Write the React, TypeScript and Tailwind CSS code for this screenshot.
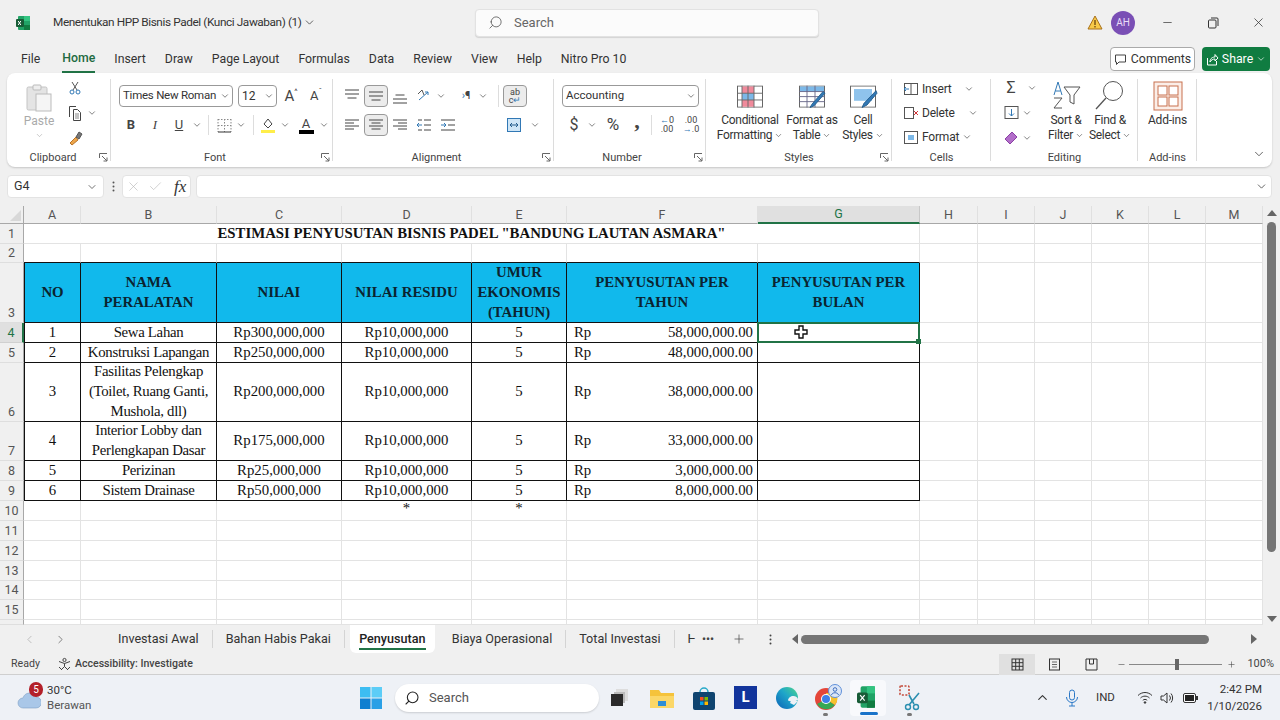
import type { ReactNode } from "react";
import { ChevronDown, Search, X, Minus, Plus, ChevronLeft, ChevronRight, ChevronUp, Check } from "lucide-react";

const UI = "font-['Roboto',sans-serif]";

// ─── Small helpers ────────────────────────────────────────────────────────────

function Chev({ size = 10, className = "text-[#444]" }: { size?: number; className?: string }) {
  return <ChevronDown size={size} strokeWidth={1.6} className={`shrink-0 ${className}`} />;
}

function Slot({ w, children, className = "" }: { w: number; children?: ReactNode; className?: string }) {
  return (
    <div className={`flex shrink-0 items-center justify-center ${className}`} style={{ width: w }}>
      {children}
    </div>
  );
}

function Svg({ s = 16, h, children }: { s?: number; h?: number; children: ReactNode }) {
  return (
    <svg width={s} height={h ?? s} viewBox={`0 0 ${s} ${h ?? s}`} fill="none" stroke="#555" strokeWidth="1" className="shrink-0">
      {children}
    </svg>
  );
}

function Launcher() {
  return (
    <svg width="9" height="9" viewBox="0 0 9 9" fill="none" stroke="#666" className="absolute bottom-[5px] right-[3px]">
      <path d="M.5 5V.5H8M3 3l5 5M8 4.5V8H4.5" />
    </svg>
  );
}

function Group({ w, label, launcher, labelPad = 0, children }: { w: number; label?: string; launcher?: boolean; labelPad?: number; children: ReactNode }) {
  return (
    <div className="relative flex h-full shrink-0 flex-col pt-[11px]" style={{ width: w }}>
      <div className="h-[67px]">{children}</div>
      {label && (
        <div className="text-center text-[11px] leading-[14px] text-[#444]" style={{ paddingRight: labelPad }}>
          {label}
        </div>
      )}
      {launcher && <Launcher />}
      <div className="absolute bottom-[6px] right-0 top-[6px] w-px bg-[#dcdcdc]" />
    </div>
  );
}

function Lines({ rows, align = "center" }: { rows: [number, number][]; align?: "left" | "center" | "right" }) {
  return (
    <Svg s={16}>
      {rows.map(([y, w], i) => {
        const x = align === "left" ? 1 : align === "right" ? 15 - w : (16 - w) / 2;
        return <path key={i} d={`M${x} ${y}h${w}`} stroke="#444" />;
      })}
    </Svg>
  );
}

function BigLabel({ a, b }: { a: string; b: string }) {
  return (
    <div className="mt-[2px] whitespace-nowrap text-center text-[12px] leading-[15px] tracking-[-0.3px] text-[#333]">
      <div>{a}</div>
      <div className="flex items-center justify-center gap-[2px]">
        {b}
        <Chev size={9} />
      </div>
    </div>
  );
}

// ─── Sheet data ───────────────────────────────────────────────────────────────

const COLUMNS = ["A", "B", "C", "D", "E", "F", "G", "H", "I", "J", "K", "L", "M"];

const HEAD = ["NO", "NAMA\nPERALATAN", "NILAI", "NILAI RESIDU", "UMUR\nEKONOMIS\n(TAHUN)", "PENYUSUTAN PER\nTAHUN", "PENYUSUTAN PER\nBULAN"];

const DATA = [
  { row: 4, no: "1", name: "Sewa Lahan", nilai: "Rp300,000,000", perTahun: "58,000,000.00" },
  { row: 5, no: "2", name: "Konstruksi Lapangan", nilai: "Rp250,000,000", perTahun: "48,000,000.00" },
  { row: 6, no: "3", name: "Fasilitas Pelengkap\n(Toilet, Ruang Ganti,\nMushola, dll)", nilai: "Rp200,000,000", perTahun: "38,000,000.00" },
  { row: 7, no: "4", name: "Interior Lobby dan\nPerlengkapan Dasar", nilai: "Rp175,000,000", perTahun: "33,000,000.00" },
  { row: 8, no: "5", name: "Perizinan", nilai: "Rp25,000,000", perTahun: "3,000,000.00" },
  { row: 9, no: "6", name: "Sistem Drainase", nilai: "Rp50,000,000", perTahun: "8,000,000.00" },
];

const GRID_LINE = "border-r border-b border-[#e3e3e3]";
const BLACK = "border-r border-b border-[#111]";
const CENTER = "flex items-center justify-center text-center whitespace-pre-line";

function RowHead({ n, active, hidden }: { n: number; active?: boolean; hidden?: boolean }) {
  return (
    <div
      className={`${UI} flex items-end justify-center border-b border-r text-[12.5px] leading-[18px] ${
        active ? "border-r-2 border-b-[#d0d0d0] border-r-[#217346] bg-[#e0e0e0] text-[#217346]" : "border-b-[#dedede] border-r-[#a8a8a8] bg-[#f0f0f0] text-[#555]"
      }`}
    >
      {hidden ? null : n}
    </div>
  );
}

function EmptyCols({ from }: { from: number }) {
  return (
    <>
      {COLUMNS.slice(from).map((c) => (
        <div key={c} className={GRID_LINE} />
      ))}
    </>
  );
}

function Sheet() {
  return (
    <div className="grid h-[419px] w-[1263px] shrink-0 grid-cols-[24px_57px_136px_125px_130px_95px_191px_162px_58px_57px_57px_57px_57px_57px] grid-rows-[18px_20px_19px_60px_20px_20px_59px_39px_20px_20px_20px_20px_20px_20px_19px_20px_5px] overflow-hidden bg-white font-['Liberation_Serif',serif] text-[14.8px] leading-[19.7px] text-[#111]">
      {/* column headers */}
      <div className="flex items-end justify-end border-b border-r border-[#a8a8a8] bg-[#f0f0f0] p-[2px]">
        <div className="h-0 w-0 border-b-[11px] border-l-[11px] border-b-[#d8d8d8] border-l-transparent" />
      </div>
      {COLUMNS.map((c) => (
        <div
          key={c}
          className={`${UI} flex items-center justify-center border-r text-[12.5px] ${
            c === "G" ? "border-b-2 border-b-[#217346] border-r-[#c8c8c8] bg-[#e0e0e0] text-[#217346]" : "border-b border-b-[#a8a8a8] border-r-[#e0e0e0] bg-[#f0f0f0] text-[#555]"
          }`}
        >
          {c}
        </div>
      ))}

      {/* title */}
      <RowHead n={1} />
      <div className={`${GRID_LINE} col-span-7 ${CENTER} font-bold`}>ESTIMASI PENYUSUTAN BISNIS PADEL &quot;BANDUNG LAUTAN ASMARA&quot;</div>
      <EmptyCols from={7} />

      <RowHead n={2} />
      {COLUMNS.slice(0, 7).map((c) => (
        <div key={c} className="border-b border-r border-b-[#111] border-r-[#e3e3e3]" />
      ))}
      <EmptyCols from={7} />

      {/* table head */}
      <RowHead n={3} />
      {HEAD.map((h, i) => (
        <div key={h} className={`${BLACK} ${i === 0 ? "border-l" : ""} ${CENTER} bg-[#11b9ec] pt-[1px] font-bold text-[#0b2430]`}>
          {h}
        </div>
      ))}
      <EmptyCols from={7} />

      {/* table rows */}
      {DATA.map((d) => (
        <div key={d.row} className="contents">
          <RowHead n={d.row} active={d.row === 4} />
          <div className={`${BLACK} border-l ${CENTER}`}>{d.no}</div>
          <div className={`${BLACK} ${CENTER} tracking-[-0.3px]`}>{d.name}</div>
          <div className={`${BLACK} ${CENTER}`}>{d.nilai}</div>
          <div className={`${BLACK} ${CENTER}`}>Rp10,000,000</div>
          <div className={`${BLACK} ${CENTER}`}>5</div>
          <div className={`${BLACK} flex items-center justify-between pl-[7px] pr-1`}>
            <span>Rp</span>
            <span>{d.perTahun}</span>
          </div>
          <div className={`${BLACK} relative`}>
            {d.row === 4 && (
              <div className="absolute -inset-x-px -bottom-px -top-px z-10 border-2 border-[#217346]">
                <div className="absolute -bottom-[3px] -right-[3px] h-[5px] w-[5px] bg-[#217346]" />
                <svg width="14" height="14" viewBox="0 0 14 14" className="absolute left-[35px] top-[1px]">
                  <path d="M5 1h4v4h4v4H9v4H5V9H1V5h4z" fill="#fff" stroke="#111" strokeWidth="1.4" />
                </svg>
              </div>
            )}
          </div>
          <EmptyCols from={7} />
        </div>
      ))}

      {/* rows below the table */}
      {[10, 11, 12, 13, 14, 15, 16].map((n) => (
        <div key={n} className="contents">
          <RowHead n={n} hidden={n === 16} />
          {COLUMNS.map((c) => (
            <div key={c} className={`${GRID_LINE} flex justify-center font-normal leading-[14px]`}>
              {n === 10 && (c === "D" || c === "E") ? "*" : null}
            </div>
          ))}
        </div>
      ))}
    </div>
  );
}

// ─── Ribbon ───────────────────────────────────────────────────────────────────

function Ribbon() {
  return (
    <div className="ml-[7px] flex h-[94px] w-[1265px] rounded-lg bg-white shadow-[0_1px_2px_rgba(0,0,0,0.18)]">
      {/* Clipboard */}
      <Group w={104} label="Clipboard" launcher labelPad={12}>
        <div className="flex">
          <div className="ml-[15px] flex w-[34px] flex-col items-center">
            <Svg s={28} h={28}>
              <rect x="2" y="3" width="20" height="23" rx="1.5" fill="#e4e4e4" stroke="#c4c4c4" />
              <rect x="8" y="1" width="8" height="5" rx="1" fill="#eee" stroke="#bbb" />
              <rect x="11" y="10" width="15" height="17" fill="#f5f5f5" stroke="#bbb" />
            </Svg>
            <div className="mt-[1px] text-[12px] leading-[16px] text-[#aaa]">Paste</div>
            <Chev size={9} className="mt-[2px] text-[#aaa]" />
          </div>
          <div className="-mt-[5px] ml-[7px] flex flex-col gap-[8px]">
            <Slot w={24} className="h-[17px]">
              <Svg s={14}>
                <path d="M4 1l5 8M10 1L5 9" stroke="#555" />
                <circle cx="4" cy="11" r="2" stroke="#3178b5" />
                <circle cx="10" cy="11" r="2" stroke="#3178b5" />
              </Svg>
            </Slot>
            <div className="flex items-center">
              <Slot w={24} className="h-[17px]">
                <Svg s={16}>
                  <path d="M2.5 12V1.5H9M6.5 4.5h4l3 3v8h-7z" stroke="#444" />
                  <path d="M8 9h4M8 11h4M8 13h4" stroke="#888" />
                </Svg>
              </Slot>
              <Chev size={10} />
            </div>
            <Slot w={24} className="h-[17px]">
              <Svg s={16}>
                <path d="M9 7l-6 6 2 2 6-5z" fill="#eda54a" stroke="#b8742a" />
                <path d="M9 7l3-5 3 2-3 5z" fill="#777" stroke="#555" />
              </Svg>
            </Slot>
          </div>
        </div>
      </Group>

      {/* Font */}
      <Group w={222} label="Font" launcher labelPad={14}>
        <div className="flex h-[24px] items-center pl-[8px]">
          <div className="flex h-[22px] w-[114px] items-center justify-between whitespace-nowrap rounded border border-[#999] pl-[3px] pr-[2px] text-[11.5px] tracking-[-0.25px] text-[#333]">
            Times New Roman <Chev />
          </div>
          <div className="ml-[5px] flex h-[22px] w-[39px] items-center justify-between rounded border border-[#999] pl-[3px] pr-[2px] text-[12px] text-[#333]">
            12 <Chev />
          </div>
          <Slot w={26} className="ml-[1px] text-[15px] text-[#444]">
            A<sup className="text-[8px]">^</sup>
          </Slot>
          <Slot w={24} className="text-[13px] text-[#444]">
            A<sup className="text-[8px]">ˇ</sup>
          </Slot>
        </div>
        <div className="mt-[5px] flex h-[24px] items-center pl-[8px] text-[13px] text-[#444]">
          <Slot w={24} className="font-bold">B</Slot>
          <Slot w={24} className="font-['Liberation_Serif',serif] italic">I</Slot>
          <Slot w={24} className="underline">U</Slot>
          <Slot w={12}><Chev /></Slot>
          <div className="mx-[5px] h-[20px] w-px bg-[#ddd]" />
          <Slot w={20}>
            <Svg s={15}>
              <path d="M1 1.5h13M1 7.5h13M7.5 1v13M1 1v13M14 1v13" stroke="#888" strokeDasharray="1.5 1.5" />
              <path d="M1 14h13" stroke="#333" />
            </Svg>
          </Slot>
          <Slot w={14}><Chev /></Slot>
          <div className="mx-[5px] h-[20px] w-px bg-[#ddd]" />
          <Slot w={18}>
            <Svg s={16}>
              <path d="M8 2l4 5-4 4-4-4z" stroke="#444" />
              <path d="M1 13h14v3H1z" fill="#ffee4a" stroke="none" />
            </Svg>
          </Slot>
          <Slot w={16}><Chev /></Slot>
          <Slot w={26}>
            <div className="flex flex-col items-center text-[13px] leading-[13px]">
              A<div className="h-[4px] w-[15px] bg-black" />
            </div>
          </Slot>
          <Slot w={10}><Chev /></Slot>
        </div>
      </Group>

      {/* Alignment */}
      <Group w={221} label="Alignment" launcher labelPad={14}>
        <div className="flex h-[24px] items-center pl-[7px]">
          <Slot w={24} className="h-[22px]"><Lines rows={[[2, 14], [6, 14], [10, 9]]} /></Slot>
          <Slot w={24} className="h-[22px] rounded border border-[#999] bg-[#ececec]"><Lines rows={[[4, 14], [8, 14], [12, 9]]} /></Slot>
          <Slot w={24} className="h-[22px]"><Lines rows={[[7, 9], [11, 14], [15, 14]]} /></Slot>
          <Slot w={24}>
            <Svg s={16}>
              <path d="M3 12L12 4M9 4h3v3" stroke="#3178b5" />
              <path d="M2 6l4-4 2 5" stroke="#555" />
            </Svg>
          </Slot>
          <Slot w={10}><Chev /></Slot>
          <Slot w={28} className="ml-[6px]"><span className="text-[11px] text-[#444]"><span className="text-[#3178b5]">›</span>¶</span></Slot>
          <Chev className="-ml-[2px] text-[#444]" />
          <div className="ml-[10px] h-[22px] w-px bg-[#ddd]" />
          <Slot w={24} className="ml-[4px] h-[22px] rounded border border-[#999] bg-[#ececec]">
            <div className="text-center text-[9px] leading-[8px] text-[#444]">ab<br />c<span className="text-[#3178b5]">↵</span></div>
          </Slot>
        </div>
        <div className="mt-[5px] flex h-[24px] items-center pl-[7px]">
          <Slot w={24} className="h-[22px]"><Lines align="left" rows={[[3, 14], [6, 9], [9, 14], [12, 9]]} /></Slot>
          <Slot w={24} className="h-[22px] rounded border border-[#999] bg-[#ececec]"><Lines rows={[[3, 14], [6, 9], [9, 14], [12, 9]]} /></Slot>
          <Slot w={24} className="h-[22px]"><Lines align="right" rows={[[3, 14], [6, 9], [9, 14], [12, 9]]} /></Slot>
          <Slot w={24}>
            <Svg s={16}>
              <path d="M8 3h7M8 8h7M8 13h7M2 3h4M2 13h4" stroke="#444" />
              <path d="M6 8H1M3 6L1 8l2 2" stroke="#3178b5" />
            </Svg>
          </Slot>
          <Slot w={24}>
            <Svg s={16}>
              <path d="M1 3h14M8 8h7M1 13h14" stroke="#444" />
              <path d="M1 8h5M4 6l2 2-2 2" stroke="#3178b5" />
            </Svg>
          </Slot>
          <Slot w={42} />
          <Slot w={24}>
            <Svg s={16}>
              <rect x="1.5" y="1.5" width="13" height="13" stroke="#3178b5" fill="#cfe6f7" />
              <path d="M4 8h8M4 8l2-2M4 8l2 2M12 8l-2-2M12 8l-2 2" stroke="#245d8c" />
            </Svg>
          </Slot>
          <Slot w={18}><Chev /></Slot>
        </div>
      </Group>

      {/* Number */}
      <Group w={152} label="Number" launcher labelPad={16}>
        <div className="flex h-[24px] items-center pl-[8px]">
          <div className="flex h-[22px] w-[137px] items-center justify-between rounded border border-[#999] pl-[3px] pr-[2px] text-[11.5px] text-[#333]">
            Accounting <Chev />
          </div>
        </div>
        <div className="mt-[5px] flex h-[24px] items-center pl-[8px] text-[#444]">
          <Slot w={24} className="text-[16px]">$</Slot>
          <Slot w={12}><Chev /></Slot>
          <Slot w={30} className="text-[17px]">%</Slot>
          <Slot w={18} className="-translate-y-[5px] font-['Liberation_Serif',serif] text-[22px] font-bold">,</Slot>
          <div className="mx-[5px] h-[20px] w-px bg-[#ddd]" />
          <Slot w={20} className="text-center text-[9px] leading-[9px]"><span><span className="text-[#3178b5]">←</span>0<br />.00</span></Slot>
          <Slot w={28} className="text-center text-[9px] leading-[9px]"><span>.00<br /><span className="text-[#3178b5]">→</span>.0</span></Slot>
        </div>
      </Group>

      {/* Styles */}
      <Group w={186} label="Styles" launcher>
        <div className="-mt-[3px] flex pl-[8px]">
          <div className="flex w-[72px] flex-col items-center">
            <Svg s={30} h={30}>
              <g transform="translate(0 3) scale(1 .84)">
                <rect x="2.5" y="2.5" width="25" height="25" fill="#fff" stroke="#666" />
                <path d="M7 3h12v8H7zM7 19h12v8H7z" fill="#f08a9b" stroke="none" />
                <path d="M7 11h12v8H7z" fill="#7cb8e8" stroke="none" />
                <path d="M7 2v26M13 2v26M19 2v26M2 11h26M2 19h26" stroke="#666" />
              </g>
            </Svg>
            <BigLabel a="Conditional" b="Formatting" />
          </div>
          <div className="-ml-[4px] flex w-[60px] flex-col items-center">
            <Svg s={30} h={30}>
              <g transform="translate(0 3) scale(1 .84)">
                <rect x="2.5" y="2.5" width="25" height="25" fill="#fff" stroke="#666" />
                <path d="M3 3h24v6H3z" fill="#7cb8e8" stroke="none" />
                <path d="M2 9h26M2 15h26M2 21h26M10 2v26M18 2v26" stroke="#668" />
                <path d="M26 9L15 24l-2 4 4-2L28 11z" fill="#3178b5" stroke="#245d8c" />
              </g>
            </Svg>
            <BigLabel a="Format as" b="Table" />
          </div>
          <div className="-ml-[5px] flex w-[52px] flex-col items-center">
            <Svg s={30} h={30}>
              <g transform="translate(0 3) scale(1 .84)">
                <rect x="2.5" y="2.5" width="25" height="25" fill="#fff" stroke="#666" />
                <path d="M6 6h18v14H6z" fill="#8fc3ec" stroke="none" />
                <path d="M28 8L16 23l-2 5 5-3 10-14z" fill="#3178b5" stroke="#245d8c" />
              </g>
            </Svg>
            <BigLabel a="Cell" b="Styles" />
          </div>
        </div>
      </Group>

      {/* Cells */}
      <Group w={99} label="Cells">
        <div className="-mt-[4px] flex flex-col gap-[6px] pl-[11px] text-[12px] leading-[18px] tracking-[-0.2px] text-[#333]">
          <div className="flex items-center gap-[3px]">
            <Svg s={16}>
              <rect x="1.5" y="2.5" width="13" height="11" stroke="#555" />
              <path d="M6 8H1M3 6L1 8l2 2" stroke="#3178b5" />
              <path d="M8 3v10" stroke="#555" />
            </Svg>
            <span className="w-[39px]">Insert</span>
            <Chev />
          </div>
          <div className="flex items-center gap-[3px]">
            <Svg s={16}>
              <rect x="1.5" y="2.5" width="9" height="11" stroke="#555" />
              <path d="M11 6l4 4M15 6l-4 4" stroke="#d13438" />
            </Svg>
            <span className="w-[43px]">Delete</span>
            <Chev />
          </div>
          <div className="flex items-center gap-[3px]">
            <Svg s={16}>
              <rect x="1.5" y="2.5" width="13" height="12" stroke="#555" />
              <rect x="5" y="6" width="6" height="5" fill="#7cb8e8" stroke="none" />
            </Svg>
            <span>Format</span>
            <Chev />
          </div>
        </div>
      </Group>

      {/* Editing */}
      <Group w={147} label="Editing">
        <div className="flex pl-[9px]">
          <div className="-mt-[5px] flex w-[40px] flex-col gap-[8px] text-[#444]">
            <div className="flex h-[17px] items-center">
              <Slot w={22} className="text-[16px]">Σ</Slot>
              <Slot w={20}><Chev /></Slot>
            </div>
            <div className="flex h-[17px] items-center">
              <Slot w={22}>
                <Svg s={15}>
                  <rect x="1" y="1.5" width="13" height="12" stroke="#555" />
                  <path d="M7.5 4v7M5 8.5l2.5 2.5L10 8.5" stroke="#3178b5" />
                </Svg>
              </Slot>
              <Slot w={9}><Chev /></Slot>
            </div>
            <div className="flex h-[17px] items-center">
              <Slot w={22}>
                <Svg s={16}>
                  <path d="M2 9l7-7 5 5-7 7z" fill="#b26ec9" stroke="#8a3fa5" />
                </Svg>
              </Slot>
              <Slot w={9}><Chev /></Slot>
            </div>
          </div>
          <div className="-mt-[3px] ml-[3px] flex w-[46px] flex-col items-center">
            <Svg s={30} h={30}>
              <path d="M3 14L7 1l4 13M4.5 10h5" stroke="#3178b5" />
              <path d="M3 17h8l-8 10h8" stroke="#555" />
              <path d="M13 6h16l-6 8v9l-4-2v-7z" stroke="#555" />
            </Svg>
            <BigLabel a="Sort &" b="Filter" />
          </div>
          <div className="-mt-[3px] flex w-[42px] flex-col items-center">
            <Svg s={30} h={30}>
              <circle cx="18" cy="10" r="9.5" stroke="#555" />
              <path d="M11 17L1 28" stroke="#555" strokeWidth="1.3" />
            </Svg>
            <BigLabel a="Find &" b="Select" />
          </div>
        </div>
      </Group>

      {/* Add-ins */}
      <Group w={59} label="Add-ins">
        <div className="-mt-[3px] flex flex-col items-center">
          <Svg s={30} h={30}>
            <rect x="1" y="1" width="28" height="28" fill="#fbeee8" stroke="#c8714e" />
            <rect x="5" y="5" width="9" height="9" fill="#fff" stroke="#c8714e" />
            <rect x="16" y="5" width="9" height="9" fill="#fff" stroke="#c8714e" />
            <rect x="5" y="16" width="9" height="9" fill="#fff" stroke="#c8714e" />
            <rect x="16" y="16" width="9" height="9" fill="#fff" stroke="#c8714e" />
          </Svg>
          <div className="mt-[2px] text-[12px] leading-[15px] tracking-[-0.2px] text-[#333]">Add-ins</div>
        </div>
      </Group>

      <div className="flex flex-1 items-end justify-end pb-[6px] pr-[6px]">
        <ChevronDown size={14} strokeWidth={1.4} className="text-[#444]" />
      </div>
    </div>
  );
}

// ─── Page ─────────────────────────────────────────────────────────────────────

const TABS = ["Home", "Insert", "Draw", "Page Layout", "Formulas", "Data", "Review", "View", "Help", "Nitro Pro 10"];

function SheetTab({ label }: { label: string }) {
  return (
    <div className="mr-[13px] flex h-[18px] items-center whitespace-nowrap border-r border-[#d4d4d4] pr-[13px] text-[12.6px] text-[#333]">{label}</div>
  );
}

export default function App() {
  return (
    <div className={`${UI} flex h-[720px] w-[1280px] flex-col overflow-hidden bg-[#f0f0f0] text-[12.3px] text-[#333]`}>
      {/* Title bar */}
      <div className="flex h-[45px] shrink-0 items-center">
        <svg width="16" height="16" viewBox="0 0 16 16" className="ml-[15px] shrink-0">
          <rect x="3" y="1" width="12" height="14" rx="1" fill="#21a366" />
          <rect x="9" y="1" width="6" height="5" fill="#33c481" />
          <rect x="9" y="10" width="6" height="5" fill="#107c41" />
          <rect x="1" y="4" width="8" height="8" rx="1" fill="#185c37" />
          <path d="M3.2 6l2.6 4M5.8 6l-2.6 4" stroke="#fff" strokeWidth="1" />
        </svg>
        <div className="ml-[22px] w-[249px] whitespace-nowrap text-[11.8px] tracking-[-0.4px] text-[#333]">Menentukan HPP Bisnis Padel (Kunci Jawaban) (1)</div>
        <ChevronDown size={13} strokeWidth={1.5} className="ml-[1px] text-[#444]" />
        <div className="ml-[159px] flex h-[28px] w-[344px] items-center rounded border border-[#e2e2e2] bg-[#fbfbfb] shadow-[0_1px_1px_rgba(0,0,0,0.12)]">
          <Search size={15} strokeWidth={1.3} className="ml-[12px] -scale-x-100 text-[#555]" />
          <span className="ml-[11px] text-[13px] text-[#666]">Search</span>
        </div>
        <svg width="16" height="15" viewBox="0 0 16 15" className="ml-[268px] shrink-0">
          <path d="M8 1l7 13H1z" fill="#f7c948" stroke="#a8701a" />
          <path d="M8 5v5M8 11v1.5" stroke="#6b4510" strokeWidth="1.3" />
        </svg>
        <div className="ml-[8px] flex h-[24px] w-[24px] items-center justify-center rounded-full bg-[#7a4fb5] text-[10px] text-[#e9def7]">AH</div>
        <Minus size={13} strokeWidth={1.3} className="ml-[26px] text-[#333]" />
        <svg width="12" height="12" viewBox="0 0 12 12" fill="none" stroke="#333" className="ml-[33px]">
          <rect x="1.5" y="3" width="7.5" height="8" rx="1" />
          <path d="M4 1h6a1 1 0 011 1v7" />
        </svg>
        <X size={15} strokeWidth={1.2} className="ml-[32px] text-[#333]" />
      </div>

      {/* Menu tabs */}
      <div className="flex h-[28px] shrink-0 items-center pl-[21px] text-[12.3px] text-[#333]">
        <span className="mr-[22px]">File</span>
        <div className="flex gap-[19px]">
          {TABS.map((t) => (
            <div key={t} className={`flex h-[28px] items-center whitespace-nowrap ${t === "Home" ? "border-b-2 border-[#217346] font-medium text-[#1d6a41]" : ""}`}>
              {t}
            </div>
          ))}
        </div>
        <div className="ml-auto flex items-center gap-[7px] pr-[10px]">
          <div className="flex h-[24px] w-[85px] items-center justify-center gap-[4px] rounded border border-[#aaa] bg-white">
            <svg width="13" height="13" viewBox="0 0 13 13" fill="none" stroke="#444">
              <path d="M1.5 2h10v7H5L2.5 11.5V9h-1z" />
            </svg>
            Comments
          </div>
          <div className="flex h-[24px] w-[68px] items-center justify-center gap-[3px] rounded bg-[#107c41] text-white">
            <svg width="13" height="13" viewBox="0 0 13 13" fill="none" stroke="#fff">
              <path d="M1.5 5v7h9V8M4 9c0-4 3-5 5-5V1.5l3 3.5-3 3V6C7 6 5 7 4 9z" />
            </svg>
            Share
            <Chev size={10} className="text-white" />
          </div>
        </div>
      </div>

      <Ribbon />

      {/* Formula bar */}
      <div className="mt-[8px] flex h-[23px] shrink-0 items-stretch pl-[7px] pr-[8px]">
        <div className="flex w-[97px] items-center justify-between rounded border border-[#e3e3e3] bg-white pl-[6px] pr-[5px] text-[12.5px]">
          G4 <ChevronDown size={12} strokeWidth={1.5} className="text-[#444]" />
        </div>
        <Slot w={18} className="text-[#555]">
          <svg width="3" height="11" viewBox="0 0 3 11" fill="#555"><circle cx="1.5" cy="1.5" r="1" /><circle cx="1.5" cy="5.5" r="1" /><circle cx="1.5" cy="9.5" r="1" /></svg>
        </Slot>
        <div className="flex w-[69px] items-center rounded border border-[#e3e3e3] bg-white pl-[3px]">
          <X size={15} strokeWidth={1} className="text-[#b5b5b5]" />
          <Check size={15} strokeWidth={1} className="ml-[7px] text-[#b5b5b5]" />
          <span className="ml-[11px] font-['Liberation_Serif',serif] text-[17px] italic text-[#333]">fx</span>
        </div>
        <div className="ml-[5px] flex flex-1 items-center justify-end rounded border border-[#e3e3e3] bg-white pr-[3px]">
          <ChevronDown size={13} strokeWidth={1.5} className="text-[#444]" />
        </div>
      </div>

      {/* Sheet */}
      <div className="mt-[8px] flex h-[419px] shrink-0">
        <Sheet />
        <div className="flex flex-1 flex-col items-center pt-[4px]">
          <div className="h-0 w-0 border-x-[5px] border-b-[6px] border-x-transparent border-b-[#666]" />
          <div className="mt-[6px] h-[330px] w-[9px] rounded-full bg-[#757575]" />
          <div className="mb-[3px] mt-auto h-0 w-0 border-x-[5px] border-t-[6px] border-x-transparent border-t-[#666]" />
        </div>
      </div>

      {/* Sheet tabs */}
      <div className="flex h-[28px] shrink-0 items-center bg-[#f0f0f0]">
        <ChevronLeft size={13} strokeWidth={1.3} className="ml-[23px] text-[#aaa]" />
        <ChevronRight size={13} strokeWidth={1.3} className="ml-[18px] text-[#555]" />
        <div className="ml-[51px] flex w-[584px] shrink-0 items-center">
          <SheetTab label="Investasi Awal" />
          <SheetTab label="Bahan Habis Pakai" />
          <div className="-ml-[8px] mr-[17px] flex h-[28px] w-[85px] shrink-0 flex-col items-center justify-center rounded-b-md bg-white text-[12.6px] font-medium text-[#222]">
            <span className="border-b-2 border-[#217346] leading-[19px]">Penyusutan</span>
          </div>
          <SheetTab label="Biaya Operasional" />
          <SheetTab label="Total Investasi" />
          <span className="text-[13px] text-[#333]">Ⱶ</span>
        </div>
        <span className="w-[16px] text-[11px] font-bold leading-none text-[#444]">•••</span>
        <Plus size={14} strokeWidth={1.2} className="ml-[14px] text-[#444]" />
        <svg width="3" height="11" viewBox="0 0 3 11" fill="#444" className="ml-[23px]"><circle cx="1.5" cy="1.5" r="1" /><circle cx="1.5" cy="5.5" r="1" /><circle cx="1.5" cy="9.5" r="1" /></svg>
        <div className="ml-[20px] h-0 w-0 border-y-[5px] border-r-[6px] border-y-transparent border-r-[#666]" />
        <div className="ml-[3px] h-[9px] w-[408px] rounded-full bg-[#757575]" />
        <div className="ml-[42px] h-0 w-0 border-y-[5px] border-l-[6px] border-y-transparent border-l-[#666]" />
      </div>

      {/* Status bar */}
      <div className="flex h-[22px] shrink-0 items-center border-b border-[#cfcfcf] pt-[1px] text-[10.6px] text-[#444]">
        <span className="ml-[11px]">Ready</span>
        <svg width="15" height="15" viewBox="0 0 15 15" fill="none" stroke="#444" className="ml-[17px]">
          <circle cx="7.5" cy="3" r="1.6" />
          <path d="M2 4.5l5.5 2 5.5-2M7.5 6.5v3M4 13l3.5-3.5L11 13M2 10l3 3M10 13l3-3" />
        </svg>
        <span className="ml-[3px] font-medium">Accessibility: Investigate</span>
        <div className="ml-auto flex h-[21px] w-[36px] items-center justify-center bg-[#e0e0e0]">
          <Svg s={13}>
            <rect x="1" y="1" width="11" height="11" stroke="#333" />
            <path d="M1 4.7h11M1 8.3h11M4.7 1v11M8.3 1v11" stroke="#333" />
          </Svg>
        </div>
        <Slot w={38}>
          <Svg s={13}>
            <rect x="1.5" y="1" width="10" height="11" stroke="#333" />
            <path d="M4 4h5M4 6.5h5M4 9h5" stroke="#666" />
          </Svg>
        </Slot>
        <Slot w={37}>
          <Svg s={13}>
            <path d="M1 1h11v11H1zM4.5 1v5h4V1" stroke="#333" />
          </Svg>
        </Slot>
        <Minus size={9} strokeWidth={1.5} className="ml-[7px] text-[#444]" />
        <div className="relative ml-[3px] flex h-[12px] w-[93px] items-center">
          <div className="h-px w-full bg-[#888]" />
          <div className="absolute left-[46px] h-[11px] w-[4px] bg-[#666]" />
        </div>
        <Plus size={9} strokeWidth={1.5} className="ml-[5px] text-[#444]" />
        <span className="ml-[11px] mr-[6px] text-[11px]">100%</span>
      </div>

      {/* Taskbar */}
      <div className="flex flex-1 items-center bg-[#eef1f6] text-[#333]">
        <div className="relative ml-[17px] h-[22px] w-[24px]">
          <svg width="24" height="20" viewBox="0 0 24 20" className="absolute bottom-0 left-0">
            <path d="M6 19a5 5 0 010-10 7 7 0 0113-1 5.5 5.5 0 010 11z" fill="#a9c7e8" stroke="#7d9fc4" strokeWidth=".6" />
          </svg>
          <div className="absolute -right-[2px] -top-[5px] flex h-[15px] w-[14px] items-center justify-center rounded-full bg-[#b3202a] text-[10px] text-white">5</div>
        </div>
        <div className="ml-[6px] w-[60px] text-[11.5px] leading-[15px]">
          <div>30°C</div>
          <div className="text-[#555]">Berawan</div>
        </div>
        <svg width="22" height="22" viewBox="0 0 22 22" className="ml-[253px]">
          <path d="M0 0h10.5v10.5H0z" fill="#3dbdf2" />
          <path d="M11.5 0H22v10.5H11.5z" fill="#5ccdf7" />
          <path d="M0 11.5h10.5V22H0z" fill="#0f7fd0" />
          <path d="M11.5 11.5H22V22H11.5z" fill="#2aa0e6" />
        </svg>
        <div className="ml-[13px] flex h-[28px] w-[204px] items-center rounded-full bg-white shadow-[0_1px_2px_rgba(0,0,0,0.15)]">
          <Search size={16} strokeWidth={1.6} className="ml-[9px] -scale-x-100 text-[#222]" />
          <span className="ml-[9px] text-[13px] text-[#555]">Search</span>
        </div>
        <svg width="17" height="17" viewBox="0 0 17 17" className="ml-[12px]">
          <rect x="5" y="0" width="12" height="12" fill="#ddd" />
          <rect x="3" y="3" width="11" height="11" fill="#bbb" />
          <rect x="0" y="5" width="12" height="12" fill="#2a2a2a" />
        </svg>
        <svg width="24" height="20" viewBox="0 0 24 20" className="ml-[22px]">
          <path d="M0 2h9l2 3h13v15H0z" fill="#f5c33b" />
          <path d="M0 8h24v12H0z" fill="#fbd768" />
          <rect x="8" y="13" width="8" height="5" fill="#2e8ed6" />
        </svg>
        <svg width="22" height="24" viewBox="0 0 22 24" className="ml-[19px]">
          <path d="M7 6a4 4 0 018 0" fill="none" stroke="#27a9c9" strokeWidth="1.5" />
          <rect x="0" y="6" width="22" height="18" rx="2" fill="#0f4470" />
          <rect x="7" y="11" width="3.5" height="3.5" fill="#f25022" />
          <rect x="11.5" y="11" width="3.5" height="3.5" fill="#7fba00" />
          <rect x="7" y="15.5" width="3.5" height="3.5" fill="#00a4ef" />
          <rect x="11.5" y="15.5" width="3.5" height="3.5" fill="#ffb900" />
        </svg>
        <div className="ml-[19px] flex h-[23px] w-[23px] items-center justify-center bg-[#12349c] text-[15px] font-bold text-white">L</div>

        {/* Edge */}
        <svg width="22" height="22" viewBox="0 0 22 22" className="ml-[19px]">
          <defs>
            <linearGradient id="edge" x1="1" y1="0" x2="0" y2="1">
              <stop offset="0" stopColor="#4fd68a" />
              <stop offset=".45" stopColor="#1fa6c9" />
              <stop offset="1" stopColor="#0b62b8" />
            </linearGradient>
          </defs>
          <circle cx="11" cy="11" r="11" fill="url(#edge)" />
          <path d="M22 13c-2 1.5-7 2-10 .5 0-2 2-4.5 5-4.5 2.5 0 5 1 5 4z" fill="#eef1f6" />
          <path d="M22 14l-4 4-4-2 1-2z" fill="#eef1f6" />
        </svg>

        {/* Chrome */}
        <div className="relative ml-[16px] h-[28px] w-[28px]">
          <svg width="28" height="28" viewBox="0 0 28 28">
            <circle cx="12" cy="15" r="11" fill="#e4463a" />
            <path d="M12 15L3 20a11 11 0 0018 1z" fill="#38a853" />
            <path d="M12 15l9 6a11 11 0 001-12H12z" fill="#f7c22e" />
            <circle cx="12" cy="15" r="5" fill="#fff" />
            <circle cx="12" cy="15" r="4" fill="#3f7fe8" />
            <circle cx="21" cy="7" r="6.5" fill="#dbe6f7" stroke="#5e8fd9" />
            <circle cx="21" cy="5.5" r="1.8" fill="none" stroke="#3f6fc0" />
            <path d="M17.5 11c.5-3 6.5-3 7 0" fill="none" stroke="#3f6fc0" />
          </svg>
          <div className="absolute -bottom-[4px] left-[9px] h-[3px] w-[5px] rounded-full bg-[#777]" />
        </div>

        {/* Excel, active */}
        <div className="relative ml-[8px] flex h-[36px] w-[36px] items-center justify-center rounded bg-[#f8f9fc] pb-[2px] pr-[4px]">
          <svg width="18" height="22" viewBox="0 0 20 24">
            <rect x="4" y="0" width="16" height="24" rx="2" fill="#21a366" />
            <rect x="11" y="0" width="9" height="8" fill="#33c481" />
            <rect x="11" y="16" width="9" height="8" fill="#107c41" />
            <rect x="0" y="7" width="12" height="12" rx="2" fill="#185c37" />
            <path d="M3.5 10l5 6M8.5 10l-5 6" stroke="#fff" strokeWidth="1.3" />
          </svg>
          <div className="absolute bottom-[1px] left-[10px] h-[3px] w-[18px] rounded-full bg-[#1a73c9]" />
        </div>

        {/* Snipping tool */}
        <div className="relative ml-[13px] h-[26px] w-[22px]">
          <svg width="22" height="26" viewBox="0 0 22 26" fill="none">
            <rect x="1" y="1" width="9" height="9" rx="1" stroke="#c44a3a" strokeWidth="1.6" strokeDasharray="2 1.5" />
            <path d="M10 10l5 9M20 8L10 20" stroke="#2b8fb0" strokeWidth="1.6" />
            <circle cx="9" cy="22" r="2.5" stroke="#2b8fb0" strokeWidth="1.4" />
            <circle cx="17" cy="22" r="2.5" stroke="#2b8fb0" strokeWidth="1.4" />
          </svg>
          <div className="absolute -bottom-[5px] left-[8px] h-[3px] w-[5px] rounded-full bg-[#777]" />
        </div>

        <ChevronUp size={15} strokeWidth={1.8} className="ml-[114px] text-[#333]" />
        <svg width="14" height="18" viewBox="0 0 14 18" fill="none" stroke="#2a78c7" className="ml-[15px]">
          <rect x="4.5" y="1" width="5" height="10" rx="2.5" />
          <path d="M1.5 8a5.5 5.5 0 0011 0M7 13.5V17M4 17h6" />
        </svg>
        <span className="ml-[17px] w-[30px] text-[11.5px]">IND</span>
        <svg width="16" height="13" viewBox="0 0 16 13" fill="none" stroke="#333" className="ml-[11px]">
          <path d="M1 4.5c4-4 10-4 14 0M3.5 7c2.5-2.5 6.5-2.5 9 0M5.8 9.3c1.2-1.2 3.2-1.2 4.4 0" />
          <circle cx="8" cy="11.5" r=".8" fill="#333" />
        </svg>
        <svg width="14" height="14" viewBox="0 0 14 14" fill="none" stroke="#333" className="ml-[7px]">
          <path d="M1 5v4h2.5L7 12V2L3.5 5zM9.5 4.5a4 4 0 010 5M11 2.5a7 7 0 010 9" />
        </svg>
        <svg width="15" height="10" viewBox="0 0 15 10" className="ml-[9px]">
          <rect x=".5" y=".5" width="12" height="9" rx="1.5" fill="#fff" stroke="#333" />
          <rect x="2" y="2" width="9" height="6" fill="#222" />
          <rect x="13" y="3" width="2" height="4" fill="#333" />
        </svg>
        <div className="ml-auto pr-[18px] text-right text-[11.5px] leading-[17px]">
          <div>2:42 PM</div>
          <div>1/10/2026</div>
        </div>
      </div>
    </div>
  );
}
